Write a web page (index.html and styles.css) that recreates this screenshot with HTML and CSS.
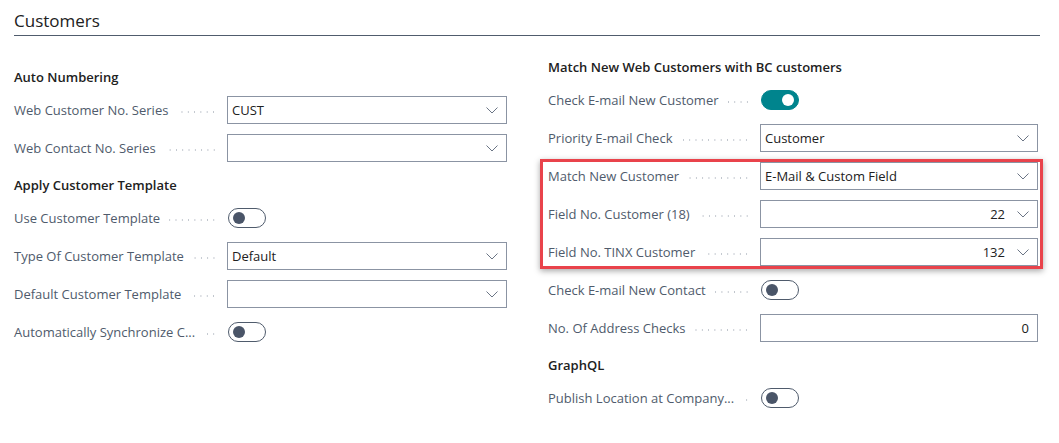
FILE: index.html
```html
<!DOCTYPE html>
<html>
<head>
<meta charset="utf-8">
<link rel="stylesheet" href="styles.css">
</head>
<body>
<div class="page">
  <div class="title">Customers</div>
  <div class="cols">
    <div class="col col-left">
      <div class="group-h">Auto Numbering</div>
      <div class="row">
        <div class="lbl"><span class="txt">Web Customer No. Series</span><span class="dots"></span></div>
        <div class="fld"><span class="val">CUST</span><svg class="chev" viewBox="0 0 12 7"><path d="M0.5 0.5 L6 6 L11.5 0.5"/></svg></div>
      </div>
      <div class="row">
        <div class="lbl"><span class="txt">Web Contact No. Series</span><span class="dots"></span></div>
        <div class="fld"><span class="val"></span><svg class="chev" viewBox="0 0 12 7"><path d="M0.5 0.5 L6 6 L11.5 0.5"/></svg></div>
      </div>
      <div class="group-h">Apply Customer Template</div>
      <div class="row">
        <div class="lbl"><span class="txt">Use Customer Template</span><span class="dots"></span></div>
        <div class="tgl-wrap"><span class="tgl"><span class="knob"></span></span></div>
      </div>
      <div class="row">
        <div class="lbl"><span class="txt">Type Of Customer Template</span><span class="dots"></span></div>
        <div class="fld"><span class="val">Default</span><svg class="chev" viewBox="0 0 12 7"><path d="M0.5 0.5 L6 6 L11.5 0.5"/></svg></div>
      </div>
      <div class="row">
        <div class="lbl"><span class="txt">Default Customer Template</span><span class="dots"></span></div>
        <div class="fld"><span class="val"></span><svg class="chev" viewBox="0 0 12 7"><path d="M0.5 0.5 L6 6 L11.5 0.5"/></svg></div>
      </div>
      <div class="row">
        <div class="lbl"><span class="txt">Automatically Synchronize C...</span><span class="dots"></span></div>
        <div class="tgl-wrap"><span class="tgl"><span class="knob"></span></span></div>
      </div>
    </div>
    <div class="col col-right">
      <div class="group-h">Match New Web Customers with BC customers</div>
      <div class="row">
        <div class="lbl"><span class="txt">Check E-mail New Customer</span><span class="dots"></span></div>
        <div class="tgl-wrap"><span class="tgl on"><span class="knob"></span></span></div>
      </div>
      <div class="row">
        <div class="lbl"><span class="txt">Priority E-mail Check</span><span class="dots"></span></div>
        <div class="fld"><span class="val">Customer</span><svg class="chev" viewBox="0 0 12 7"><path d="M0.5 0.5 L6 6 L11.5 0.5"/></svg></div>
      </div>
      <div class="hl">
        <div class="row">
          <div class="lbl"><span class="txt">Match New Customer</span><span class="dots"></span></div>
          <div class="fld"><span class="val">E-Mail &amp; Custom Field</span><svg class="chev" viewBox="0 0 12 7"><path d="M0.5 0.5 L6 6 L11.5 0.5"/></svg></div>
        </div>
        <div class="row">
          <div class="lbl"><span class="txt">Field No. Customer (18)</span><span class="dots"></span></div>
          <div class="fld"><span class="val num">22</span><svg class="chev" viewBox="0 0 12 7"><path d="M0.5 0.5 L6 6 L11.5 0.5"/></svg></div>
        </div>
        <div class="row">
          <div class="lbl"><span class="txt">Field No. TINX Customer</span><span class="dots"></span></div>
          <div class="fld"><span class="val num">132</span><svg class="chev" viewBox="0 0 12 7"><path d="M0.5 0.5 L6 6 L11.5 0.5"/></svg></div>
        </div>
      </div>
      <div class="row">
        <div class="lbl"><span class="txt">Check E-mail New Contact</span><span class="dots"></span></div>
        <div class="tgl-wrap"><span class="tgl"><span class="knob"></span></span></div>
      </div>
      <div class="row">
        <div class="lbl"><span class="txt">No. Of Address Checks</span><span class="dots"></span></div>
        <div class="fld plain"><span class="val num">0</span></div>
      </div>
      <div class="group-h">GraphQL</div>
      <div class="row">
        <div class="lbl"><span class="txt">Publish Location at Company...</span><span class="dots"></span></div>
        <div class="tgl-wrap"><span class="tgl"><span class="knob"></span></span></div>
      </div>
    </div>
  </div>
</div>
</body>
</html>
```
FILE: styles.css
```css
html, body {
  margin: 0;
  padding: 0;
  background: #ffffff;
}
body {
  font-family: "Open Sans", "Noto Sans", "Liberation Sans", sans-serif;
  color: #212121;
}
.page {
  padding: 0 19px 0 14px;
}
.title {
  font-size: 17px;
  line-height: 24px;
  padding-top: 9px;
  padding-bottom: 2px;
  border-bottom: 1px solid #505c6d;
  color: #212121;
}
.cols {
  display: grid;
  grid-template-columns: 493px 490px;
  column-gap: 41px;
  margin-top: 13px;
}
.col-left {
  padding-top: 10px;
}
.group-h {
  height: 32px;
  box-sizing: border-box;
  padding-top: 8px;
  font-size: 13px;
  line-height: 20px;
  font-weight: 600;
  color: #212121;
}
.row {
  height: 38px;
  display: grid;
  grid-template-columns: 213px 1fr;
  align-items: center;
}
.col-right .row {
  grid-template-columns: 212px 1fr;
}
.lbl {
  display: flex;
  align-items: center;
  font-size: 13px;
  line-height: 20px;
  color: #4f5b6c;
  padding-right: 10px;
  min-width: 0;
}
.txt {
  white-space: nowrap;
}
.dots {
  flex: 1;
  height: 2px;
  margin-left: 9px;
  margin-top: 3px;
  background-image: radial-gradient(circle, #bfc4cc 0.7px, transparent 0.9px);
  background-size: 6.3px 2px;
  background-repeat: repeat-x;
  background-position: right center;
}
.fld {
  height: 28px;
  box-sizing: border-box;
  border: 1px solid #8b94a3;
  display: flex;
  align-items: center;
  padding: 0 8px 0 4px;
  font-size: 13px;
  color: #212121;
  background: #fff;
}
.val {
  flex: 1;
  white-space: nowrap;
}
.val.num {
  text-align: right;
  padding-right: 12px;
}
.fld.plain .val.num {
  padding-right: 0;
}
.chev {
  width: 12px;
  height: 7px;
  flex: none;
}
.chev path {
  fill: none;
  stroke: #6b7585;
  stroke-width: 1;
}
.tgl-wrap {
  display: flex;
  align-items: center;
  padding-left: 1px;
}
.tgl {
  width: 38px;
  height: 20px;
  box-sizing: border-box;
  border: 1px solid #4f5b6c;
  border-radius: 10px;
  background: #fff;
  display: flex;
  align-items: center;
  padding: 0 4px;
}
.knob {
  width: 12px;
  height: 12px;
  border-radius: 50%;
  background: #4a5568;
}
.tgl.on {
  background: #00848d;
  border-color: #00848d;
  justify-content: flex-end;
}
.tgl.on .knob {
  background: #ffffff;
}
.hl {
  position: relative;
}
.hl::after {
  content: "";
  position: absolute;
  top: 2px;
  bottom: 2px;
  left: -8px;
  right: -5px;
  border: 3px solid #e9434b;
  box-shadow: 0 2px 6px rgba(0, 0, 0, 0.35);
  pointer-events: none;
}
```
